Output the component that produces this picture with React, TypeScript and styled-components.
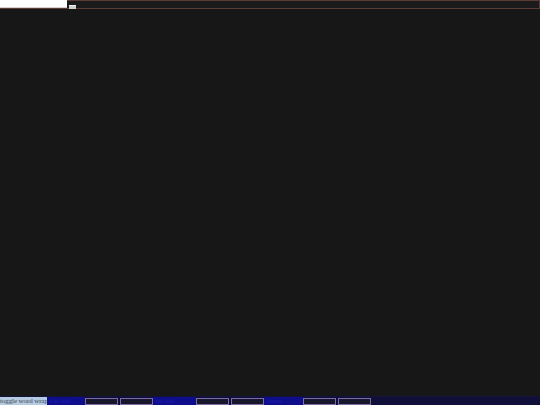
import React from "react";
import styled, { createGlobalStyle } from "styled-components";

const Global = createGlobalStyle`
  html, body { margin: 0; padding: 0; background: #171717; }
  #root { height: 405px; }
`;

const Page = styled.div`
  height: 405px;
  width: 540px;
  display: flex;
  flex-direction: column;
  background: #171717;
  overflow: hidden;
  font-family: "Liberation Serif", serif;
`;

const Header = styled.div`
  height: 9px;
  box-sizing: border-box;
  display: flex;
  align-items: stretch;
  gap: 2px;
  background: #1b1b1b;
  border: 1px solid #5b3c34;
  border-left: none;
`;

const TitleInput = styled.div`
  width: 67px;
  margin-top: -1px;
  height: 8px;
  background: #ffffff;
  border-bottom: 1px solid #d8d0cc;
  box-sizing: border-box;
`;

const TinyButton = styled.div`
  width: 7px;
  height: 3px;
  align-self: flex-end;
  margin-bottom: -1px;
  background: #d0d0d0;
  border-top: 1px solid #f0f0f0;
`;

const Editor = styled.div`
  flex: 1;
  background: #171717;
`;

const Footer = styled.div`
  height: 9px;
  display: flex;
  align-items: stretch;
  background: #0c0c44;
  border-top: 1px solid #14143a;
  box-sizing: border-box;
`;

const WrapButton = styled.div`
  width: 47px;
  background: #b4cbe2;
  color: #404850;
  font-size: 7px;
  line-height: 8px;
  white-space: nowrap;
  overflow: hidden;
  letter-spacing: -0.1px;
`;

const Label = styled.div<{ $w: number }>`
  width: ${(p) => p.$w}px;
  background: #0e0e8c;
  color: #1c1cae;
  font-size: 6px;
  line-height: 8px;
  white-space: nowrap;
  overflow: hidden;
  padding-left: 3px;
  box-sizing: border-box;
`;

const Field = styled.div<{ $gap?: number }>`
  width: 33px;
  margin-left: ${(p) => p.$gap ?? 0}px;
  margin-top: 1px;
  box-sizing: border-box;
  border: 1px solid #7e6d9e;
  background: #16162c;
`;

const Rest = styled.div`
  flex: 1;
  background: #0f0f3a;
`;

export default function App() {
  return (
    <Page>
      <Global />
      <Header>
        <TitleInput />
        <TinyButton />
      </Header>
      <Editor />
      <Footer>
        <WrapButton>toggle word wrap</WrapButton>
        <Label $w={38}>font size</Label>
        <Field />
        <Field $gap={2} />
        <Label $w={43}>tab size</Label>
        <Field />
        <Field $gap={2} />
        <Label $w={39}>theme</Label>
        <Field />
        <Field $gap={2} />
        <Rest />
      </Footer>
    </Page>
  );
}
